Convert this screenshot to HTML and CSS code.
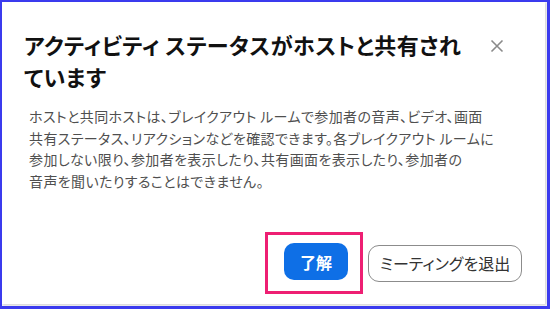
FILE: index.html
```html
<!DOCTYPE html>
<html lang="ja">
<head>
<meta charset="utf-8">
<link rel="stylesheet" href="styles.css">
</head>
<body>
<div class="frame">
  <div class="dialog">
    <div class="header">
      <h1 class="title">アクティビティ ステータスがホストと共有され<br>ています</h1>
      <button class="close" aria-label="閉じる">
        <svg width="14" height="14" viewBox="0 0 14 14"><path d="M1.5 1.5 L12.5 12.5 M12.5 1.5 L1.5 12.5" stroke="#8a8a8a" stroke-width="1.6" fill="none"/></svg>
      </button>
    </div>
    <p class="body">ホストと共同ホストは、ブレイクアウト ルームで参加者の音声、ビデオ、画面<br>共有ステータス、リアクションなどを確認できます。各ブレイクアウト ルームに<br>参加しない限り、参加者を表示したり、共有画面を表示したり、参加者の<br>音声を聞いたりすることはできません。</p>
    <div class="actions">
      <div class="highlight">
        <button class="btn primary">了解</button>
      </div>
      <button class="btn secondary">ミーティングを退出</button>
    </div>
  </div>
</div>
</body>
</html>
```
FILE: styles.css
```css
html, body {
  margin: 0;
  padding: 0;
  background: #fff;
}
.frame {
  width: 550px;
  height: 309px;
  box-sizing: border-box;
  border: 2px solid #3b3bef;
  border-right-width: 3px;
  border-bottom-width: 3px;
  background: #f4f4f6;
}
.dialog {
  height: 302px;
  width: 543px;
  background: #fff;
  box-shadow: 1px 1px 2px rgba(0,0,0,0.15);
  font-family: "Noto Sans CJK JP", "Noto Sans", sans-serif;
  font-feature-settings: "palt";
  display: flex;
  flex-direction: column;
}
.header {
  display: flex;
  align-items: flex-start;
  padding: 26px 0 0 22px;
}
.title {
  margin: 0;
  font-size: 22px;
  line-height: 32px;
  font-weight: 700;
  color: #111;
  flex: 1;
  white-space: nowrap;
  letter-spacing: 0.45px;
}
.close {
  border: 0;
  background: none;
  padding: 0;
  margin: 11px 41px 0 0;
  width: 14px;
  height: 14px;
  display: flex;
}
.body {
  margin: 14px 0 0 27px;
  font-size: 14px;
  line-height: 21.5px;
  color: #4f4f4f;
  white-space: nowrap;
  letter-spacing: 0.38px;
}
.actions {
  display: flex;
  align-items: center;
  margin-top: auto;
  margin-bottom: 10px;
  padding-left: 263px;
  gap: 5px;
}
.highlight {
  border: 3px solid #ee1f73;
  padding: 8px 12px 11px 16px;
  display: flex;
}
.btn {
  font-family: "Noto Sans CJK JP", "Noto Sans", sans-serif;
  font-feature-settings: "palt";
  height: 37px;
  box-sizing: border-box;
  padding: 0;
  margin: 0;
  font-size: 16px;
}
.primary {
  width: 64px;
  background: #0e6fe6;
  color: #fff;
  border: 0;
  border-radius: 10px;
  font-weight: 700;
}
.secondary {
  width: 154px;
  background: #fff;
  color: #333;
  border: 1.5px solid #8c8c8c;
  border-radius: 11px;
}
```
